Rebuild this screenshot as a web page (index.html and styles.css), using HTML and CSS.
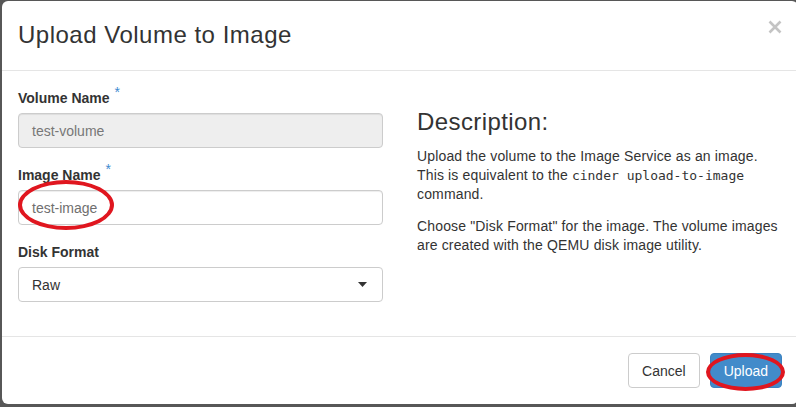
FILE: index.html
```html
<!DOCTYPE html>
<html>
<head>
<meta charset="utf-8">
<link rel="stylesheet" href="styles.css">
</head>
<body>
<div class="modal">
  <div class="modal-header">
    <h4 class="modal-title">Upload Volume to Image</h4>
    <svg class="close" width="14" height="14" viewBox="0 0 14 14"><path d="M1.5 1.5 L12.5 12.5 M12.5 1.5 L1.5 12.5" stroke="#c4c4c4" stroke-width="2.6" fill="none"/></svg>
  </div>
  <div class="modal-body">
    <div class="left">
      <div class="form-group">
        <label class="label">Volume Name <span class="req">*</span></label>
        <div class="input disabled">test-volume</div>
      </div>
      <div class="form-group">
        <label class="label">Image Name <span class="req">*</span></label>
        <div class="input">test-image</div>
      </div>
      <div class="form-group">
        <label class="label">Disk Format</label>
        <div class="input select"><span class="select-text">Raw</span><svg class="caret" width="9" height="5" viewBox="0 0 9 5"><path d="M0 0 H9 L4.5 5 Z" fill="#333"/></svg></div>
      </div>
    </div>
    <div class="right">
      <h3 class="desc-title">Description:</h3>
      <p class="desc">Upload the volume to the Image Service as an image. This is equivalent to the <code class="code">cinder upload-to-image</code> command.</p>
      <p class="desc">Choose "Disk Format" for the image. The volume images are created with the QEMU disk image utility.</p>
    </div>
  </div>
  <div class="modal-footer">
    <button class="btn btn-default">Cancel</button>
    <button class="btn btn-primary">Upload</button>
  </div>
  <div class="mark mark-input"></div>
  <div class="mark mark-button"></div>
</div>
</body>
</html>
```
FILE: styles.css
```css
html, body {
  margin: 0;
  padding: 0;
  overflow: hidden;
}
body {
  background: #575757;
  font-family: "Liberation Sans", Arial, sans-serif;
  font-size: 14px;
  color: #333;
  width: 796px;
  height: 407px;
}
.modal {
  position: relative;
  margin: 1px 0 0 2px;
  width: 796px;
  background: #fff;
  border-radius: 6px;
}
.modal-header {
  height: 70px;
  box-sizing: border-box;
  border-bottom: 1px solid #e5e5e5;
  padding: 0 16px;
  display: flex;
  align-items: center;
  justify-content: space-between;
}
.modal-title {
  margin: 0 0 1px;
  font-size: 24px;
  font-weight: normal;
  letter-spacing: 0.5px;
  line-height: 26px;
  color: #333;
}
.close {
  align-self: flex-start;
  margin-top: 19px;
  margin-right: 0;
}
.modal-body {
  padding: 17px 16px 17px;
  display: grid;
  grid-template-columns: 365px 365px;
  column-gap: 34px;
}
.form-group {
  margin-bottom: 17px;
}
.label {
  display: block;
  font-weight: bold;
  line-height: 20px;
  margin-bottom: 5px;
  color: #333;
}
.req {
  color: #3d8bd0;
  font-weight: normal;
  font-size: 14px;
  line-height: 0;
  vertical-align: 6px;
  margin-left: 1px;
}
.input {
  height: 35px;
  box-sizing: border-box;
  border: 1px solid #ccc;
  border-radius: 4px;
  padding: 0 13px;
  display: flex;
  align-items: center;
  color: #6f6f6f;
  box-shadow: inset 0 1px 1px rgba(0,0,0,0.075);
}
.input.disabled {
  background: #eee;
  color: #777;
}
.select {
  justify-content: space-between;
  color: #333;
  box-shadow: none;
  padding-right: 15px;
}
.desc-title {
  margin: 21px 0 12px;
  font-size: 24px;
  font-weight: normal;
  letter-spacing: 0.4px;
  line-height: 26px;
  color: #333;
}
.desc {
  margin: 0 0 13px;
  line-height: 19px;
  letter-spacing: 0.15px;
  color: #333;
}
.code {
  font-family: "DejaVu Sans Mono", "Liberation Mono", monospace;
  font-size: 13px;
  letter-spacing: 0;
  color: #333;
}
.modal-footer {
  border-top: 1px solid #e5e5e5;
  padding: 16px 16px 16px;
  display: flex;
  justify-content: flex-end;
  gap: 10px;
}
.btn {
  height: 35px;
  padding: 0 13px;
  font-family: "Liberation Sans", Arial, sans-serif;
  font-size: 14px;
  border-radius: 4px;
  border: 1px solid #ccc;
}
.btn-default {
  background: #fff;
  color: #333;
}
.btn-primary {
  background: #428bca;
  border-color: #3b82c0;
  color: #fff;
}
.mark {
  position: absolute;
  border: 4px solid #e0161f;
  border-radius: 50%;
  box-sizing: border-box;
}
.mark-input {
  left: 16px;
  top: 179px;
  width: 96px;
  height: 50px;
}
.mark-button {
  left: 704px;
  top: 352px;
  width: 79px;
  height: 38px;
}
```
